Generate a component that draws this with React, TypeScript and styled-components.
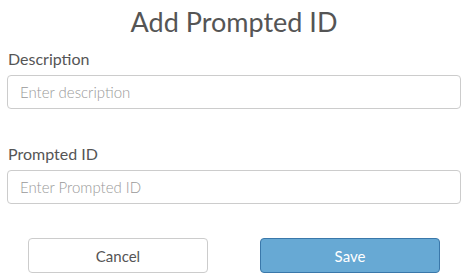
import React from "react";
import styled, { createGlobalStyle } from "styled-components";

const Global = createGlobalStyle`
  html, body { margin: 0; padding: 0; background: #fff; }
  body { font-family: Lato, "Open Sans", Arial, sans-serif; }
  * { box-sizing: border-box; }
`;

const Dialog = styled.div`
  width: 470px;
  padding: 0 9px 0 7px;
  display: flex;
  flex-direction: column;
`;

const Title = styled.h1`
  margin: 0;
  padding-top: 5px;
  height: 43px;
  text-align: center;
  font-size: 27px;
  font-weight: 400;
  line-height: 34px;
  color: #555;
`;

const Field = styled.div<{ $gap: number }>`
  display: flex;
  flex-direction: column;
  margin-top: ${(p) => p.$gap}px;
`;

const Label = styled.label`
  font-size: 16px;
  line-height: 20px;
  color: #555;
  padding-left: 1px;
  margin-bottom: 6px;
`;

const Input = styled.input`
  width: 100%;
  height: 34px;
  border: 1px solid #ccc;
  border-radius: 4px;
  padding: 0 12px;
  font-family: inherit;
  font-size: 15px;
  font-weight: 300;
  color: #555;
  outline: none;
  &::placeholder { color: #999; }
`;

const Actions = styled.div`
  display: flex;
  justify-content: center;
  gap: 52px;
  margin-top: 34px;
`;

const Button = styled.button<{ $primary?: boolean }>`
  width: 180px;
  height: 35px;
  border-radius: 4px;
  font-family: inherit;
  font-size: 15px;
  cursor: pointer;
  border: 1px solid ${(p) => (p.$primary ? "#3a78aa" : "#ccc")};
  background: ${(p) => (p.$primary ? "#67a9d4" : "#fff")};
  color: ${(p) => (p.$primary ? "#fff" : "#555")};
`;

export default function App() {
  return (
    <>
      <Global />
      <Dialog>
        <Title>Add Prompted ID</Title>
        <Field $gap={6}>
          <Label>Description</Label>
          <Input placeholder="Enter description" />
        </Field>
        <Field $gap={35}>
          <Label>Prompted ID</Label>
          <Input placeholder="Enter Prompted ID" />
        </Field>
        <Actions>
          <Button>Cancel</Button>
          <Button $primary>Save</Button>
        </Actions>
      </Dialog>
    </>
  );
}
